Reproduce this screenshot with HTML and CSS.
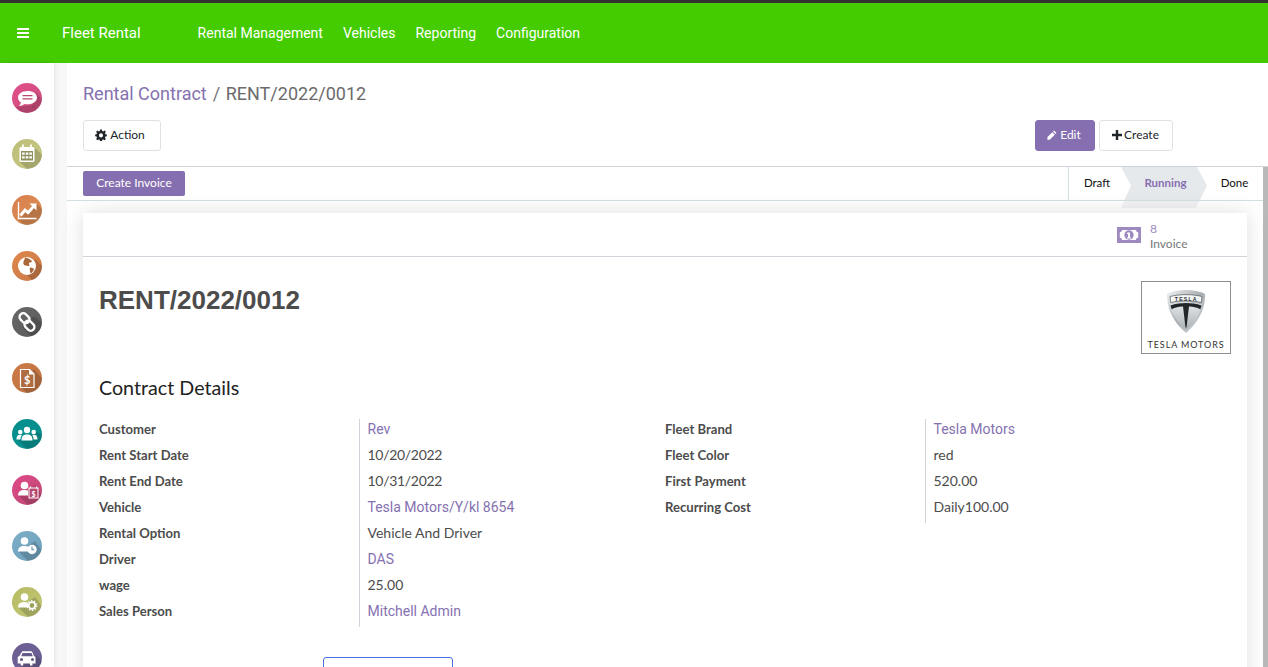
FILE: index.html
```html
<!DOCTYPE html>
<html lang="en">
<head>
<meta charset="utf-8">
<title>Rental Contract</title>
<link rel="stylesheet" href="styles.css">
</head>
<body>
<div class="app">
  <header class="navbar">
    <svg class="burger" width="12" height="10" viewBox="0 0 12 10"><path d="M0 0h12v2H0zM0 4h12v2H0zM0 8h12v2H0z" fill="#fff"/></svg>
    <span class="brand">Fleet Rental</span>
    <nav class="menu">
      <span>Rental Management</span><span>Vehicles</span><span>Reporting</span><span>Configuration</span>
    </nav>
  </header>
  <div class="main">
    <aside class="sidebar">
      <div class="app-icon c-pink"><svg viewBox="0 0 30 30"><path d="M20 23l8 7h2V17l-6-8z" class="sh"/><path d="M4 24l6 6h18l-8-8z" class="sh"/><path d="M15.500 8c-5.500 0-9.500 2.900-9.500 6.500 0 2 1.100 3.700 2.900 4.900-.2 1.400-1 2.700-2.100 3.600 2.300 0 4.200-.8 5.600-2 1 .2 2 .3 3.100 .3 5.500 0 9.500-3 9.500-6.800S21 8 15.500 8z" fill="#fff"/><path d="M10.500 12.600h10M10.500 15.800h10" stroke="#b9476f" stroke-width="1.300"/></svg></div>
      <div class="app-icon c-olive"><svg viewBox="0 0 30 30"><path d="M8 23l7 7h15V16l-7-7z" class="sh"/><rect x="7.500" y="8" width="15" height="15" rx="1.500" fill="#fff"/><rect x="9" y="12" width="12" height="9.500" fill="#8f8f5c"/><path d="M11 5.500v4.500M19 5.500v4.500" stroke="#fff" stroke-width="1.800"/><path d="M10 13.500h2.700v2.200H10zM13.700 13.500h2.700v2.200h-2.700zM17.300 13.500H20v2.200h-2.700zM10 17.200h2.700v2.200H10zM13.700 17.200h2.700v2.200h-2.700zM17.300 17.200H20v2.200h-2.700z" fill="#fff"/></svg></div>
      <div class="app-icon c-orange"><svg viewBox="0 0 30 30"><path d="M6 24l6 6h18V14l-5-5z" class="sh"/><path d="M6.500 7v16.500h18" fill="none" stroke="#fff" stroke-width="1.400"/><path d="M8.500 20.500l4.500-5.500 3 2.700 6-6.700" fill="none" stroke="#fff" stroke-width="2.800"/><path d="M17.500 8.500h7v7z" fill="#fff"/></svg></div>
      <div class="app-icon c-orange2"><svg viewBox="0 0 30 30"><path d="M15 24l6 6h9V15l-7-7z" class="sh"/><circle cx="15" cy="15" r="9" fill="#fff"/><path d="M13 6.500c3 .5 5 1.500 7 3.500-.5 1.500-2 2-3 1.500-.5 1.500 1 2.500 0 3.500-1.500.5-2.500-1-4-.5-1.500-.5-2-2.500-1.500-4 .5-1.500 1.500-2.500 1.500-4zM18 16.500c1.500 0 3 .5 4 1.500-.5 2-2 3.500-3.500 4.500-.5-1.500-1-4-.5-6z" fill="#a9683c"/></svg></div>
      <div class="app-icon c-gray"><svg viewBox="0 0 30 30"><path d="M10 20l10 10h10V16l-8-7z" class="sh"/><g fill="none" stroke="#fff" stroke-width="2.300"><rect x="7" y="7.500" width="11" height="7.500" rx="3.700" transform="rotate(45 12.500 11.300)"/><rect x="12" y="15" width="11" height="7.500" rx="3.700" transform="rotate(45 17.500 18.700)"/></g></svg></div>
      <div class="app-icon c-brown"><svg viewBox="0 0 30 30"><path d="M9 24l6 6h15V16l-8-10z" class="sh"/><path d="M8.500 6.500h9l4.500 4.500v13.500H8.500z" fill="#b06c3f" stroke="#fff" stroke-width="1.200"/><path d="M17 6.500V11.500h5z" fill="#fff"/><text x="15.200" y="21" class="dollar">$</text></svg></div>
      <div class="app-icon c-teal"><svg viewBox="0 0 30 30"><path d="M6 21l9 9h15V16l-5-3z" fill="#000" opacity=".13"/><g fill="#fff"><circle cx="15" cy="11" r="3.200"/><path d="M9.500 21.500c0-4.500 2-6 5.500-6s5.500 1.500 5.500 6z"/><circle cx="8.300" cy="13" r="2.300"/><path d="M4.500 20.500c0-3.600 1.300-4.700 3.800-4.700 .6 0 1.100 .1 1.600 .2-1 1.100-1.400 2.600-1.400 4.500z"/><circle cx="21.700" cy="13" r="2.300"/><path d="M25.500 20.500c0-3.600-1.300-4.700-3.800-4.700-.6 0-1.100 .1-1.600 .2 1 1.100 1.400 2.600 1.400 4.500z"/></g></svg></div>
      <div class="app-icon c-rose"><svg viewBox="0 0 30 30"><path d="M7 21l9 9h14V20l-7-10z" class="sh"/><g fill="#fff"><circle cx="12.500" cy="10.500" r="3.800"/><path d="M6 20.500c0-4 2.500-5.500 6.500-5.500 1.300 0 2.500 .2 3.500 .5v5z"/></g><rect x="17" y="13" width="9" height="10" fill="#b8466f" stroke="#fff"/><path d="M18.500 11.500v2M24.500 11.500v2" stroke="#fff"/><text x="21.500" y="21.500" class="tiny">$</text></svg></div>
      <div class="app-icon c-blue"><svg viewBox="0 0 30 30"><path d="M7 21l9 9h14V20l-7-10z" class="sh"/><g fill="#fff"><circle cx="12.500" cy="10" r="3.800"/><path d="M6 20.500c0-4 2.500-5.500 6.500-5.500 1.300 0 2.500 .2 3.500 .5v5z"/><circle cx="20" cy="18.500" r="4.700"/></g><path d="M20 15.500v3.300h2.300" fill="none" stroke="#5f8eab" stroke-width="1.100"/></svg></div>
      <div class="app-icon c-lime"><svg viewBox="0 0 30 30"><path d="M7 21l9 9h14V20l-7-10z" class="sh"/><g fill="#fff"><circle cx="12.500" cy="10" r="3.800"/><path d="M6 20.500c0-4 2.500-5.500 6.500-5.500 1.300 0 2.500 .2 3.500 .5v5z"/></g><circle cx="20" cy="18.500" r="3.300" fill="none" stroke="#fff" stroke-width="1.800"/><circle cx="20" cy="18.500" r="4.800" fill="none" stroke="#fff" stroke-width="1.300" stroke-dasharray="1.500 1.500"/></svg></div>
      <div class="app-icon c-violet"><svg viewBox="0 0 30 30"><path d="M6 20l10 10h14V18l-6-6z" class="sh"/><path d="M9.500 9.500c.3-.8 1-1.200 1.800-1.200h7.400c.8 0 1.500 .4 1.800 1.200l1.500 3.800 1.500 .5v6.700h-3v2h-2.500v-2h-6.800v2H8.700v-2h-3v-6.700l1.500-.5z" fill="#fff"/><path d="M10.500 10h9l1.200 3.200H9.300z" fill="#65588a"/><circle cx="9.500" cy="16.500" r="1.500" fill="#65588a"/><circle cx="20.500" cy="16.500" r="1.500" fill="#65588a"/></svg></div>
    </aside>
    <div class="gutter"></div>
    <main class="content">
      <div class="control-panel">
        <div class="breadcrumb"><a class="link">Rental Contract</a><span class="sep">/</span><span class="crumb">RENT/2022/0012</span></div>
        <div class="toolbar">
          <button class="btn btn-action"><svg class="ic" width="11" height="11" viewBox="0 0 24 24"><path fill-rule="evenodd" d="M10 0h4l.7 3.400 2.300 1 3-1.900 2.800 2.800-1.900 3 1 2.300L25 11.300v4l-3.100.7-1 2.300 1.900 3-2.800 2.800-3-1.900-2.300 1L14 27h-4l-.7-3.800-2.300-1-3 1.900-2.800-2.800 1.900-3-1-2.300L-1 15.300v-4l3.100-.7 1-2.300-1.900-3 2.800-2.800 3 1.900 2.300-1zM12 8.800a4.500 4.500 0 1 0 0 9 4.500 4.500 0 0 0 0-9z" transform="translate(1.200 .8) scale(.9)" fill="#212529"/></svg>Action</button>
          <div class="toolbar-right">
            <button class="btn btn-edit"><svg class="ic" width="10" height="10" viewBox="0 0 10 10"><path d="M7 .5l2.500 2.500-1 1L6 1.500zM5.300 2.200l2.500 2.500L3 9.500.4 10l.1-2.900z" fill="#fff"/></svg>Edit</button>
            <button class="btn btn-create"><svg class="ic" width="10" height="10" viewBox="0 0 10 10"><path d="M3.800 0h2.400v3.800H10v2.400H6.200V10H3.800V6.200H0V3.800h3.800z" fill="#212529"/></svg>Create</button>
          </div>
        </div>
      </div>
      <div class="scroll-area">
        <div class="statusbar">
          <button class="btn-invoice">Create Invoice</button>
          <div class="steps">
            <span class="step step-first">Draft</span>
            <span class="step step-active"><span class="step-label">Running</span></span>
            <span class="step step-last">Done</span>
          </div>
        </div>
        <section class="sheet">
          <div class="button-box">
            <div class="stat">
              <svg width="24" height="16" viewBox="0 0 24 16"><path fill-rule="evenodd" d="M0 0h24v16H0zM5 3c0 1.300-.9 2.200-2.200 2.200v5.600c1.300 0 2.200.9 2.200 2.200h14c0-1.300.9-2.200 2.200-2.200V5.200C19.900 5.200 19 4.300 19 3z" fill="#9d8bc0"/><circle cx="12" cy="8" r="4.700" fill="#9d8bc0"/><path d="M11 5.500h2v5h1v1h-4v-1h1V7h-1V6z" fill="#fff"/></svg>
              <div class="stat-text"><span class="stat-num">8</span><span class="stat-label">Invoice</span></div>
            </div>
          </div>
          <div class="sheet-body">
            <div class="title-row">
              <h1 class="title">RENT/2022/0012</h1>
              <div class="logo">
                <svg width="38" height="43" viewBox="0 0 38 43">
                  <defs>
                    <linearGradient id="sg" x1="0" y1="0" x2="1" y2="1"><stop offset="0" stop-color="#f2f3f4"/><stop offset=".5" stop-color="#a8aeb2"/><stop offset="1" stop-color="#d9dcde"/></linearGradient>
                    <linearGradient id="pg" x1="0" y1="0" x2="0" y2="1"><stop offset="0" stop-color="#e9ebec"/><stop offset="1" stop-color="#aab0b4"/></linearGradient>
                  </defs>
                  <path d="M19 0c8 0 14 1.500 19 4 .5 14-6 28-19 39C6 32-.5 18 0 4c5-2.500 11-4 19-4z" fill="url(#sg)"/>
                  <path d="M3 6.500c10-2.500 22-2.500 32 0l-.7 6c-9.500-2.300-21-2.300-30.600 0z" fill="#f6f7f7" stroke="#53595d" stroke-width=".7"/>
                  <text x="19.300" y="11" class="shield-text">TESLA</text>
                  <path d="M3.500 14.500c10-3 21-3 31 0-1.500 10-7 18-15.500 25.500C10.500 32.500 5 24.500 3.500 14.500z" fill="url(#pg)"/>
                  <path d="M3.500 15.500c10-3.200 21-3.200 31 0l-1.200 3.700c-3.500-1.800-7.300-2.500-10.600-2.600h-.7L19.500 37.500h-1l-2.500-20.900h-.7c-3.300.1-7.100.8-10.600 2.600z" fill="#212629"/>
                </svg>
                <span class="logo-text">TESLA MOTORS</span>
              </div>
            </div>
            <h2 class="section-title">Contract Details</h2>
            <div class="details">
              <dl class="group">
                <dt>Customer</dt><dd><a class="link">Rev</a></dd>
                <dt>Rent Start Date</dt><dd class="date">10/20/2022</dd>
                <dt>Rent End Date</dt><dd class="date">10/31/2022</dd>
                <dt>Vehicle</dt><dd><a class="link">Tesla Motors/Y/kl 8654</a></dd>
                <dt>Rental Option</dt><dd>Vehicle And Driver</dd>
                <dt>Driver</dt><dd><a class="link">DAS</a></dd>
                <dt>wage</dt><dd>25.00</dd>
                <dt>Sales Person</dt><dd><a class="link">Mitchell Admin</a></dd>
              </dl>
              <dl class="group">
                <dt>Fleet Brand</dt><dd><a class="link">Tesla Motors</a></dd>
                <dt>Fleet Color</dt><dd>red</dd>
                <dt>First Payment</dt><dd>520.00</dd>
                <dt>Recurring Cost</dt><dd>Daily100.00</dd>
              </dl>
            </div>
            <div class="outline-box"></div>
          </div>
        </section>
      </div>
    </main>
  </div>
</div>
</body>
</html>
```
FILE: styles.css
```css
* { box-sizing: border-box; }
html, body { margin: 0; height: 100%; overflow: hidden; background: #fff; }
body { font-family: "Lato", sans-serif; font-size: 14px; color: #4c4c4c; }
.app { height: 667px; display: flex; flex-direction: column; border-top: 3px solid #333; overflow: hidden; }

.navbar { height: 60px; flex: none; background: #44cc00; color: #fff; display: flex; align-items: center; padding: 0 0 0 17px; font-family: "Roboto", sans-serif; font-size: 14px; }
.burger { flex: none; }
.brand { margin-left: 33px; width: 135.600px; font-size: 15px; }
.menu { display: flex; gap: 20px; }

.main { flex: 1; display: flex; min-height: 0; }
.sidebar { width: 54px; flex: none; background: #fff; display: flex; flex-direction: column; align-items: flex-start; gap: 26px; padding: 20px 0 0 12px; z-index: 1; box-shadow: 0 0 5px rgba(0,0,0,.12); }
.gutter { width: 13px; flex: none; background: #f7f7f7; }
.app-icon { width: 30px; height: 30px; flex: none; border-radius: 50%; overflow: hidden; }
.app-icon svg { display: block; width: 30px; height: 30px; }
.sh { fill: #000; opacity: .16; }
.c-pink { background: linear-gradient(135deg, #e24d8a, #c9507c); }
.c-olive { background: linear-gradient(135deg, #bcbd78, #c7c985); }
.c-orange { background: linear-gradient(135deg, #d97f4d, #dc9158); }
.c-orange2 { background: linear-gradient(135deg, #e0864c, #c87a47); }
.c-gray { background: linear-gradient(135deg, #686868, #5a5a5a); }
.c-brown { background: linear-gradient(135deg, #cc7a45, #bd7345); }
.c-teal { background: #078f8d; }
.c-rose { background: linear-gradient(135deg, #e2498a, #b94a72); }
.c-blue { background: linear-gradient(135deg, #7dafc9, #6d9fba); }
.c-lime { background: linear-gradient(135deg, #b6bb62, #c2c675); }
.c-violet { background: #6c5f93; }
.dollar { font: 700 11px "Lato", sans-serif; fill: #fff; text-anchor: middle; }
.tiny { font: 700 7px "Lato", sans-serif; fill: #fff; text-anchor: middle; }

.content { flex: 1; min-width: 0; display: flex; flex-direction: column; background: #fff; }
.control-panel { height: 104px; flex: none; padding: 19px 0 0 16px; border-bottom: 1px solid #ced4da; }
.breadcrumb { font-family: "Roboto", sans-serif; font-size: 18px; line-height: 24px; display: flex; }
.link { color: #8571b0; }
.sep { margin: 0 5.500px 0 6px; color: #777; }
.crumb { color: #6b6b6b; }
.toolbar { display: flex; margin-top: 14px; padding-right: 95px; justify-content: space-between; }
.toolbar-right { display: flex; gap: 4px; }
.btn { height: 31px; padding: 0 0 2px; border: 1px solid #dee2e6; border-radius: 3px; background: #fff; color: #212529; font: 12px "Lato", sans-serif; display: inline-flex; align-items: center; justify-content: center; }
.ic { margin-right: 3px; }
.btn-action { width: 78px; padding-right: 4px; }
.btn-action .ic { width: 12px; height: 12px; }
.btn-edit { width: 60px; background: #866fb0; border-color: #866fb0; color: #fff; padding-right: 2px; }
.btn-create { width: 74px; padding-right: 1px; }
.btn-create .ic { margin-right: 2px; }

.scroll-area { flex: 1; min-height: 0; border-right: 5px solid #b9b9b9; }
.statusbar { height: 34px; display: flex; justify-content: space-between; padding-left: 16px; border-bottom: 1px solid #d3dfe3; }
.btn-invoice { align-self: flex-start; margin-top: 4px; width: 102px; height: 25px; padding: 0 0 2px; border: 0; border-radius: 2px; background: #866fb0; color: #fff; font: 12px "Lato", sans-serif; }
.steps { display: flex; border-left: 1px solid #d3dfe3; height: 33px; font-size: 11.500px; }
.step { display: flex; align-items: center; justify-content: center; height: 31px; color: #111; }
.step-first { width: 52px; padding-left: 4px; }
.step-active { width: 87px; height: 41px; flex: none; align-items: flex-start; padding: 8px 0 0 2px; line-height: 15px; background: linear-gradient(#e6e9ec 33px, #d3dfe3 33px, #d3dfe3 34px, #f0f2f3 34px); color: #866fb0; font-weight: 700; clip-path: polygon(0 0, 76px 0, 86px 18.500px, 75px 41px, 0 41px, 10px 18.500px); }
.step-last { width: 55px; padding-right: 2px; }

.sheet { position: relative; margin: 12px 16px 0 16px; background: #fff; box-shadow: 0 0 20px rgba(0,0,0,.13); height: 600px; }
.button-box { height: 44px; border-bottom: 1px solid #ced4da; display: flex; justify-content: flex-end; padding-right: 59px; }
.stat { display: flex; align-items: center; gap: 9px; }
.stat-text { display: flex; flex-direction: column; font-size: 12px; line-height: 15px; margin-top: 3px; width: 38px; }
.stat-num { color: #9d8bc0; }
.stat-label { color: #777; }
.sheet-body { padding: 24px 16px 0; }
.title-row { display: flex; justify-content: space-between; align-items: flex-start; height: 95px; }
.title { margin: 6px 0 0; font: 700 26px/26px "Liberation Sans", sans-serif; color: #4c4c4c; }
.logo { width: 90px; height: 73px; border: 1px solid #8f8f8f; display: flex; flex-direction: column; align-items: center; padding-top: 8px; }
.logo svg { display: block; flex: none; }
.logo-text { font: 400 9px/11px "Lato", sans-serif; letter-spacing: .9px; color: #333; margin-top: 6px; white-space: nowrap; }
.shield-text { font: 700 5.200px "Liberation Sans", sans-serif; fill: #2b2f32; text-anchor: middle; letter-spacing: 1.200px; }
.section-title { margin: 0; font: 400 19.700px/24px "Lato", sans-serif; color: #222; }
.details { display: flex; margin-top: 19px; }
.group { flex: none; width: 566px; margin: 0; display: grid; grid-template-columns: 260px 1fr; grid-auto-rows: 26px; align-content: start; font-size: 14px; line-height: 20px; }
.group dt { font-weight: 700; font-size: 13.100px; color: #4c4c4c; }
.group dd { margin: 0; padding-left: 7.500px; border-left: 1px solid #ced4da; color: #4c4c4c; }
.group dd.date { letter-spacing: -.3px; }
.group dd .link { font-family: "Roboto", sans-serif; }
.outline-box { width: 130px; height: 30px; margin: 30px 0 0 224px; border: 1px solid #4a6ee0; border-radius: 3px; }
```
